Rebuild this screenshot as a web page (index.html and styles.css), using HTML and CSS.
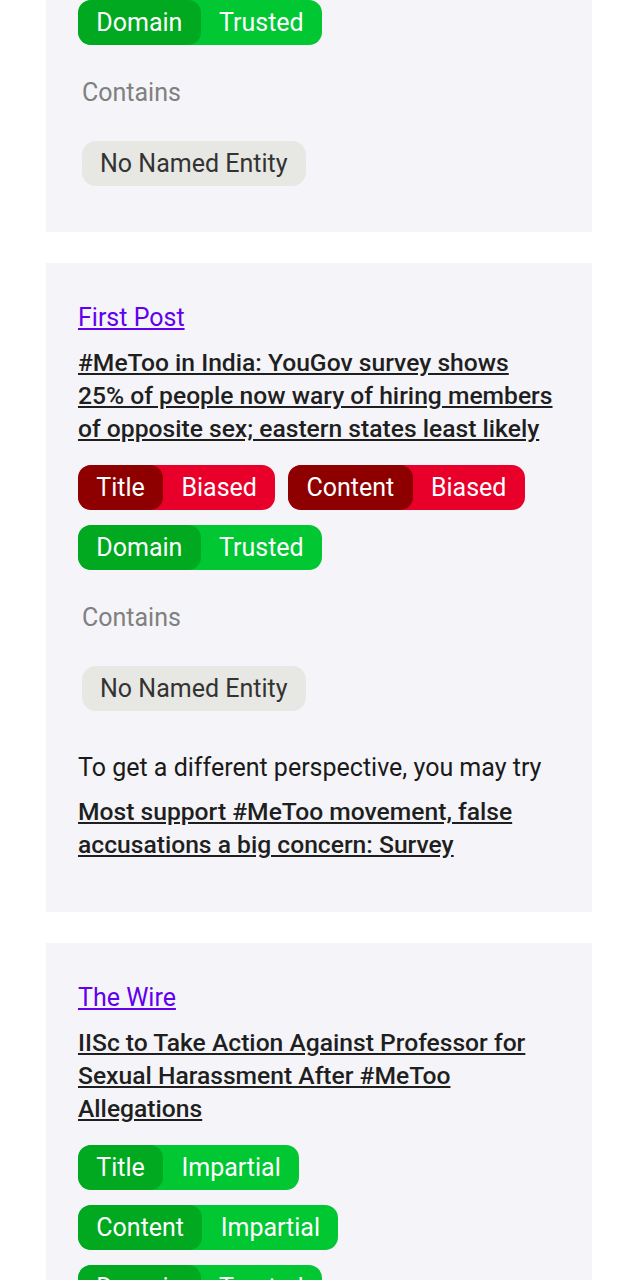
FILE: index.html
```html
<!DOCTYPE html>
<html lang="en">
<head>
<meta charset="utf-8">
<title>News bias</title>
<link rel="stylesheet" href="styles.css">
</head>
<body>
<main class="feed">
  <section class="card card-cut">
    <div class="badges">
      <span class="badge green"><span class="key">Domain</span><span class="val">Trusted</span></span>
    </div>
    <div class="contains">Contains</div>
    <div class="chips"><span class="chip">No Named Entity</span></div>
  </section>

  <section class="card">
    <a class="source" href="#">First Post</a>
    <a class="headline" href="#">#MeToo in India: YouGov survey shows 25% of people now wary of hiring members of opposite sex; eastern states least likely</a>
    <div class="badges">
      <span class="badge red"><span class="key">Title</span><span class="val">Biased</span></span>
      <span class="badge red"><span class="key">Content</span><span class="val">Biased</span></span>
      <span class="badge green"><span class="key">Domain</span><span class="val">Trusted</span></span>
    </div>
    <div class="contains">Contains</div>
    <div class="chips"><span class="chip">No Named Entity</span></div>
    <div class="perspective">
      <p class="try">To get a different perspective, you may try</p>
      <a class="headline alt" href="#">Most support #MeToo movement, false accusations a big concern: Survey</a>
    </div>
  </section>

  <section class="card">
    <a class="source" href="#">The Wire</a>
    <a class="headline" href="#">IISc to Take Action Against Professor for Sexual Harassment After #MeToo Allegations</a>
    <div class="badges">
      <span class="badge green"><span class="key">Title</span><span class="val">Impartial</span></span>
      <span class="badge green"><span class="key">Content</span><span class="val">Impartial</span></span>
      <span class="badge green"><span class="key">Domain</span><span class="val">Trusted</span></span>
    </div>
    <div class="contains">Contains</div>
    <div class="chips"><span class="chip">No Named Entity</span></div>
  </section>
</main>
</body>
</html>
```

FILE: styles.css
```css
* { box-sizing: border-box; }

html, body {
  margin: 0;
  padding: 0;
  background: #ffffff;
  font-family: Roboto, "Noto Sans", "Liberation Sans", sans-serif;
  font-size: 25px;
  color: #212121;
}

.feed {
  display: flex;
  flex-direction: column;
  gap: 31px;
  width: 546px;
  margin-left: 46px;
}

.card {
  background: #f5f5f9;
  padding: 40px 32px 46px 32px;
  display: flex;
  flex-direction: column;
  align-items: flex-start;
}

.card-cut {
  padding-top: 0;
}

.source {
  font-size: 25px;
  line-height: 30px;
  color: #6200ee;
  text-decoration: underline;
}

.headline {
  margin-top: 13px;
  max-width: 478px;
  font-size: 24.65px;
  line-height: 33px;
  font-weight: 500;
  color: #1f1f1f;
  text-decoration: underline;
}

.badges {
  margin-top: 20px;
  display: flex;
  flex-wrap: wrap;
  column-gap: 13px;
  row-gap: 15px;
}

.card-cut .badges { margin-top: 0; }

.badge {
  display: inline-flex;
  height: 45px;
  border-radius: 13px;
  color: #ffffff;
  font-size: 25px;
  line-height: 45px;
  overflow: hidden;
}

.badge .key,
.badge .val {
  padding: 0 18.3px;
}

.badge .key {
  border-radius: 13px;
}

.badge.red { background: #e8002b; }
.badge.red .key { background: #8e0000; }

.badge.green { background: #00c732; }
.badge.green .key { background: #00a920; }

.contains {
  margin-top: 33px;
  margin-left: 4px;
  font-size: 25px;
  line-height: 30px;
  color: #808080;
}

.chips {
  margin-top: 33px;
  margin-left: 4px;
  display: flex;
}

.chip {
  height: 45px;
  line-height: 45px;
  padding: 0 18px;
  border-radius: 14px;
  background: #e7e7e3;
  color: #333333;
  font-size: 25px;
}

.perspective {
  margin-top: 42px;
  margin-bottom: 5px;
  display: flex;
  flex-direction: column;
  align-items: flex-start;
}

.try {
  margin: 0;
  font-size: 25px;
  line-height: 30px;
  color: #1a1a1a;
}

.headline.alt {
  margin-top: 12px;
}
```
